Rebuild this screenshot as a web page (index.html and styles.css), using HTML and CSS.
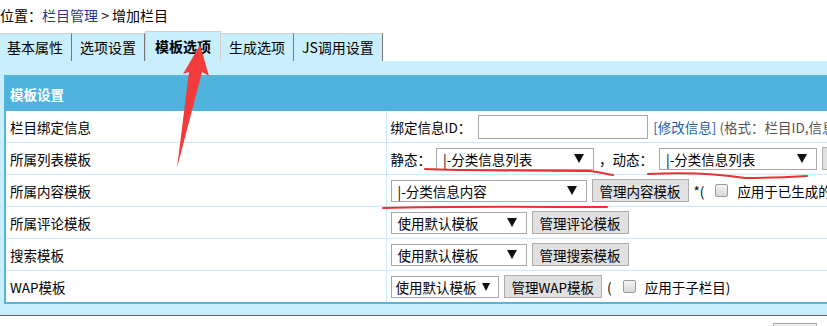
FILE: index.html
```html
<!DOCTYPE html>
<html lang="zh-CN">
<head>
    <meta charset="UTF-8">
    <title>增加栏目</title>
    <link rel="stylesheet" href="styles.css">
</head>
<body>
    <div class="crumb">位置：<a href="#">栏目管理</a> &gt; 增加栏目</div>

    <ul class="tabs">
        <li class="tab first">基本属性</li>
        <li class="tab">选项设置</li>
        <li class="tab active">模板选项</li>
        <li class="tab">生成选项</li>
        <li class="tab">JS调用设置</li>
    </ul>

    <div class="panel">
        <table class="form">
            <colgroup>
                <col class="col-label">
                <col>
            </colgroup>
            <tr class="head">
                <th colspan="2">模板设置</th>
            </tr>
            <tr>
                <td class="lbl">栏目绑定信息</td>
                <td>
                    <div class="fld">
                        <span>绑定信息ID：</span>
                        <input type="text" class="txt">
                        <span><a href="#" class="link">[修改信息]</a> <span class="note">(格式：栏目ID,信息ID)</span></span>
                    </div>
                </td>
            </tr>
            <tr>
                <td class="lbl">所属列表模板</td>
                <td>
                    <div class="fld">
                        <span>静态：</span>
                        <span class="sel w158"><span>|-分类信息列表</span><i class="arr"></i></span>
                        <span class="pad">，动态：</span>
                        <span class="sel w158"><span>|-分类信息列表</span><i class="arr"></i></span>
                        <button class="btn">管理列表模板</button>
                    </div>
                </td>
            </tr>
            <tr>
                <td class="lbl">所属内容模板</td>
                <td>
                    <div class="fld">
                        <span class="sel w196"><span>|-分类信息内容</span><i class="arr"></i></span>
                        <button class="btn">管理内容模板</button>
                        <span>*(</span>
                        <span class="chk"></span>
                        <span>应用于已生成的信息)</span>
                    </div>
                </td>
            </tr>
            <tr>
                <td class="lbl">所属评论模板</td>
                <td>
                    <div class="fld">
                        <span class="sel w135"><span>使用默认模板</span><i class="arr"></i></span>
                        <button class="btn">管理评论模板</button>
                    </div>
                </td>
            </tr>
            <tr>
                <td class="lbl">搜索模板</td>
                <td>
                    <div class="fld">
                        <span class="sel w135"><span>使用默认模板</span><i class="arr"></i></span>
                        <button class="btn">管理搜索模板</button>
                    </div>
                </td>
            </tr>
            <tr>
                <td class="lbl">WAP模板</td>
                <td>
                    <div class="fld">
                        <span class="sel w108"><span>使用默认模板</span><i class="arr"></i></span>
                        <button class="btn">管理WAP模板</button>
                        <span>(</span>
                        <span class="chk"></span>
                        <span>应用于子栏目)</span>
                    </div>
                </td>
            </tr>
        </table>
    </div>

    <div class="foot">
        <button class="btn submit">提交</button>
    </div>

    <!-- red annotation marks drawn over the screenshot -->
    <svg class="marks" width="827" height="326" viewBox="0 0 827 326">
        <polygon points="200,45 209,76 202,72 177,168 189,72 183,74" fill="#f23b3b"/>
        <path d="M425,169 C470,171 540,170 590,171 C600,172 606,174 613,175" />
        <path d="M648,174 C690,172 720,174 745,178 C770,178 790,177 807,176" />
        <path d="M383,208 C450,206 540,207 607,207" />
    </svg>
</body>
</html>
```

FILE: styles.css
```css
body {
  margin: 0;
  position: relative;
  width: 827px;
  height: 326px;
  overflow: hidden;
  background: #fff;
  font-family: "Noto Sans CJK SC", "Noto Sans", sans-serif;
  font-size: 13.5px;
  color: #000;
}

/* breadcrumb */
.crumb {
  height: 31px;
  line-height: 31px;
  font-size: 14px;
  white-space: nowrap;
}

.crumb a {
  color: #1f3d8f;
  text-decoration: none;
}

/* tabs */
.tabs {
  display: flex;
  align-items: flex-end;
  height: 30px;
  margin: 0;
  padding: 0;
  list-style: none;
  font-size: 14px;
}

.tab {
  height: 27px;
  line-height: 27px;
  padding: 0 8px;
  background: #c9eefc;
  border-top: 1px solid #d0d0d0;
  border-right: 1px solid #777;
  white-space: nowrap;
}

.tab.first {
  margin-left: -1px;
}

.tab.active {
  height: 29px;
  line-height: 29px;
  padding: 0 9px;
  font-weight: bold;
  border-left: 1px solid #d0d0d0;
  border-right: 1px solid #d0d0d0;
}

/* panel */
.panel {
  background: #c9eefc;
  padding: 14px 0 11px 4px;
  border-bottom: 1px solid #666;
  overflow: hidden;
}

.form {
  width: 1100px;
  table-layout: fixed;
  border-collapse: collapse;
  border: 2px solid #56b5dd;
  background: #fff;
}

.col-label {
  width: 381px;
}

.head th {
  height: 34px;
  padding: 0 4px;
  background: #4fb3de;
  color: #fff;
  font-weight: bold;
  text-align: left;
}

.form td {
  height: 31px;
  padding: 0 4px;
  border-bottom: 1px solid #c6ebf9;
  white-space: nowrap;
}

.form td.lbl {
  border-right: 1px solid #c6ebf9;
}

.fld {
  display: flex;
  align-items: center;
  gap: 5px;
}

.txt {
  width: 170px;
  height: 24px;
  box-sizing: border-box;
  margin: 0 0 0 2px;
  border: 1px solid #a9a9a9;
  padding: 0 4px;
  font: inherit;
}

.link {
  color: #1f5fa8;
  text-decoration: none;
}

.note {
  color: #555;
}

/* fake select */
.sel {
  display: inline-flex;
  align-items: center;
  justify-content: space-between;
  flex: none;
  height: 22px;
  box-sizing: border-box;
  padding: 0 9px 0 6px;
  border: 1px solid #a9a9a9;
  background: #fff;
}

.arr {
  width: 0;
  height: 0;
  border-left: 5px solid transparent;
  border-right: 5px solid transparent;
  border-top: 9px solid #111;
}

.w158 { width: 158px; }
.w196 { width: 196px; }
.w135 { width: 136px; }

.w108 {
  width: 108px;
  padding: 0 8px 0 4px;
}

.w108 .arr {
  border-left-width: 4px;
  border-right-width: 4px;
  border-top-width: 8px;
}

.pad {
  margin-right: 1px;
}

.btn {
  flex: none;
  height: 23px;
  box-sizing: border-box;
  padding: 0 7px;
  border: 1px solid #adadad;
  background: #e1e1e1;
  font: inherit;
  color: #000;
  white-space: nowrap;
}

.chk {
  flex: none;
  width: 13px;
  height: 13px;
  box-sizing: border-box;
  margin: 0 4px 0 6px;
  border: 1px solid #9a9a9a;
  border-radius: 2px;
  background: linear-gradient(#f4f4f4, #d8d8d8);
}

/* bottom bar */
.foot {
  display: flex;
  justify-content: flex-end;
  padding: 7px 10px 0 0;
}

.submit {
  width: 44px;
  height: 24px;
  background: #eee;
  border-color: #aaa;
}

/* annotations */
.marks {
  position: absolute;
  top: 0;
  left: 0;
  pointer-events: none;
}

.marks path {
  fill: none;
  stroke: #e83232;
  stroke-width: 2;
  stroke-linecap: round;
}
```
